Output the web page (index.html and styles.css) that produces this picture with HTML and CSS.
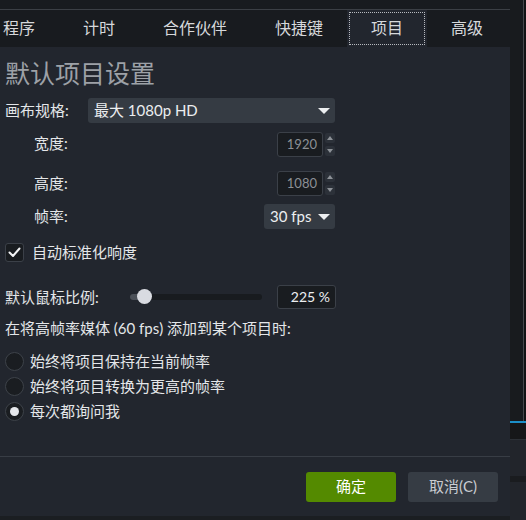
FILE: index.html
```html
<!DOCTYPE html>
<html lang="zh-CN">
<head>
    <meta charset="UTF-8">
    <meta name="viewport" content="width=device-width, initial-scale=1.0">
    <title>首选项</title>
    <link rel="stylesheet" href="styles.css">
</head>
<body>

<div class="window">
    <div class="dialog-col">
        <div class="dialog">
            <div class="titlebar"></div>
            <div class="tabs">
                <div class="tab first">程序</div>
                <div class="tab">计时</div>
                <div class="tab">合作伙伴</div>
                <div class="tab">快捷键</div>
                <div class="tab active">项目</div>
                <div class="tab">高级</div>
            </div>

            <div class="page">
                <h1>默认项目设置</h1>

                <div class="row row-canvas">
                    <span class="label">画布规格:</span>
                    <div class="select wide">
                        <span class="text">最大 1080p HD</span>
                        <i class="arrow"></i>
                    </div>
                </div>

                <div class="row row-width">
                    <span class="label sub">宽度:</span>
                    <div class="number">
                        <div class="number-box">1920</div>
                        <div class="spinner">
                            <div class="spin"><i class="up"></i></div>
                            <div class="spin"><i class="down"></i></div>
                        </div>
                    </div>
                </div>

                <div class="row row-height">
                    <span class="label sub">高度:</span>
                    <div class="number">
                        <div class="number-box">1080</div>
                        <div class="spinner">
                            <div class="spin"><i class="up"></i></div>
                            <div class="spin"><i class="down"></i></div>
                        </div>
                    </div>
                </div>

                <div class="row row-fps">
                    <span class="label sub">帧率:</span>
                    <div class="select small">
                        <span class="text">30 fps</span>
                        <i class="arrow"></i>
                    </div>
                </div>

                <label class="check-row">
                    <span class="checkbox">
                        <svg width="19" height="19" viewBox="0 0 19 19"><path d="M4.5 9.5 L8 13 L14.5 5.5" fill="none" stroke="#f2f3f5" stroke-width="2" stroke-linecap="round" stroke-linejoin="round"/></svg>
                    </span>
                    <span class="text">自动标准化响度</span>
                </label>

                <div class="row row-slider">
                    <span class="label slider-label">默认鼠标比例:</span>
                    <div class="slider">
                        <div class="slider-fill"></div>
                        <div class="slider-thumb"></div>
                    </div>
                    <div class="value-box">225 %</div>
                </div>

                <p class="question">在将高帧率媒体 (60 fps) 添加到某个项目时:</p>

                <div class="radios">
                    <label class="radio-row"><span class="radio"></span><span class="text">始终将项目保持在当前帧率</span></label>
                    <label class="radio-row"><span class="radio"></span><span class="text">始终将项目转换为更高的帧率</span></label>
                    <label class="radio-row"><span class="radio checked"></span><span class="text">每次都询问我</span></label>
                </div>
            </div>

            <div class="footer">
                <button class="btn btn-ok">确定</button>
                <button class="btn btn-cancel">取消(C)</button>
            </div>
        </div>
        <div class="dialog-edge"></div>
    </div>

    <!-- okno v pozadí -->
    <div class="side">
        <div class="side-top"></div>
        <div class="side-accent"></div>
        <div class="side-dark"></div>
        <div class="side-panel"></div>
        <div class="side-band"></div>
        <div class="side-panel rest"></div>
    </div>
</div>

</body>
</html>
```

FILE: styles.css
```css
body {
    margin: 0;
    padding: 0;
    background-color: #1b1e22;
    font-family: Lato, "Noto Sans CJK SC", sans-serif;
    font-size: 15px;
    color: #e4e6e9;
}
.window {
    display: flex;
    width: 526px;
    height: 520px;
    overflow: hidden;
}
.dialog-col {
    width: 510px;
    display: flex;
    flex-direction: column;
}
.dialog {
    height: 516px;
    background-color: #22262e;
    display: flex;
    flex-direction: column;
}
.dialog-edge {
    flex: 1;
    background-color: #1b1e22;
}
.titlebar {
    height: 9px;
    background-color: #181b1f;
    border-bottom: 1px solid #3b3f45;
}
.tabs {
    height: 37px;
    display: flex;
    background-color: #181b1f;
    font-size: 16px;
    color: #d6d8db;
}
.tab {
    padding: 0 24px 3px;
    display: flex;
    align-items: center;
    white-space: nowrap;
}
.tab.first {
    padding-left: 3px;
}
.tab.active {
    background-color: #22262e;
    outline: 1px dotted #b8bbc0;
    outline-offset: -3px;
}
.page {
    flex: 1;
    padding-left: 5px;
}
h1 {
    margin: 12px 0 0;
    height: 30px;
    line-height: 28px;
    font-size: 25px;
    font-weight: normal;
    color: #9da1a7;
}
.row {
    width: 330px;
    height: 25px;
    display: flex;
    align-items: center;
    justify-content: space-between;
}
.row-canvas { margin-top: 9px; }
.row-width { margin-top: 9px; }
.row-height { margin-top: 14px; }
.row-fps { margin-top: 8px; }
/* CJK glyphs sit low in the Lato line box */
.label, .text {
    padding-bottom: 2px;
}
.label.sub {
    padding-left: 29px;
}
.row-width .label {
    padding-bottom: 4px;
}
.select {
    height: 25px;
    box-sizing: border-box;
    background-color: #353b43;
    border-radius: 3px;
    padding: 0 5px 0 6px;
    display: flex;
    align-items: center;
    justify-content: space-between;
    color: #eceef0;
}
.select.wide { width: 247px; }
.select.small { width: 71px; }
.arrow {
    width: 0;
    height: 0;
    border-left: 6px solid transparent;
    border-right: 6px solid transparent;
    border-top: 6px solid #eceef0;
}
.number {
    display: flex;
    align-items: center;
    gap: 2px;
}
.number-box {
    width: 46px;
    height: 25px;
    box-sizing: border-box;
    background-color: #191c20;
    border: 1px solid #3b4048;
    border-radius: 3px;
    padding-right: 5px;
    text-align: right;
    line-height: 23px;
    font-size: 13px;
    color: #8c9096;
}
.spinner {
    display: flex;
    flex-direction: column;
    gap: 3px;
}
.spin {
    width: 10px;
    height: 10px;
    background-color: #2c3139;
    border-radius: 2px;
    display: flex;
    align-items: center;
    justify-content: center;
}
.spin i {
    width: 0;
    height: 0;
    border-left: 3px solid transparent;
    border-right: 3px solid transparent;
}
.spin .up { border-bottom: 4px solid #8d9197; }
.spin .down { border-top: 4px solid #8d9197; }
.check-row {
    margin-top: 11px;
    height: 25px;
    display: flex;
    align-items: center;
    gap: 8px;
}
.checkbox {
    width: 19px;
    height: 19px;
    box-sizing: border-box;
    background-color: #191c20;
    border: 1px solid #3b4048;
    border-radius: 3px;
    display: flex;
    align-items: center;
    justify-content: center;
}
.checkbox svg {
    display: block;
    margin: -1px;
}
.row-slider {
    margin-top: 20px;
    height: 24px;
    width: 331px;
    justify-content: flex-start;
}
.slider-label {
    width: 125px;
}
.slider {
    position: relative;
    width: 132px;
    height: 6px;
    background-color: #181b1f;
    border-radius: 3px;
}
.slider-fill {
    width: 14px;
    height: 6px;
    background-color: #4b5058;
    border-radius: 3px 0 0 3px;
}
.slider-thumb {
    position: absolute;
    left: 7px;
    top: -5px;
    width: 15px;
    height: 15px;
    border-radius: 50%;
    background-color: #d9dbe1;
}
.value-box {
    margin-left: auto;
    width: 59px;
    height: 24px;
    box-sizing: border-box;
    background-color: #191c20;
    border: 1px solid #3b4048;
    border-radius: 3px;
    padding-right: 5px;
    text-align: right;
    line-height: 22px;
    font-size: 14px;
    color: #eceef0;
}
.question {
    margin: 9px 0 0;
    height: 20px;
    line-height: 20px;
}
.radios {
    margin-top: 11px;
}
.radio-row {
    height: 25px;
    display: flex;
    align-items: center;
    gap: 6px;
}
.radio {
    width: 19px;
    height: 19px;
    box-sizing: border-box;
    border-radius: 50%;
    background-color: #1a1d21;
    border: 1px solid #3d4249;
    display: flex;
    align-items: center;
    justify-content: center;
}
.radio.checked::after {
    content: "";
    width: 9px;
    height: 9px;
    border-radius: 50%;
    background-color: #e6e8ec;
}
.footer {
    border-top: 1px solid #383d45;
    padding: 15px 12px 14px 0;
    display: flex;
    justify-content: flex-end;
    gap: 12px;
}
.btn {
    width: 90px;
    height: 30px;
    padding: 0 0 3px;
    border: none;
    border-radius: 3px;
    font-family: Lato, "Noto Sans CJK SC", sans-serif;
    font-size: 15px;
    cursor: pointer;
}
.btn-ok {
    background-color: #548a00;
    color: #ffffff;
}
.btn-cancel {
    background-color: #363c44;
    color: #c9ccd1;
}
.side {
    width: 16px;
    display: flex;
    flex-direction: column;
}
.side-top {
    height: 421px;
    background: linear-gradient(to right, #181b1e 0 13px, #45484c 13px 14px, #111315 14px);
}
.side-accent {
    height: 2px;
    background-color: #1c8fc8;
}
.side-dark {
    height: 16px;
    background-color: #161719;
    border-bottom: 1px solid #2c3036;
}
.side-panel {
    height: 36px;
    background-color: #22252b;
}
.side-band {
    height: 6px;
    background-color: #1a1c1f;
}
.side-panel.rest {
    flex: 1;
}
```
